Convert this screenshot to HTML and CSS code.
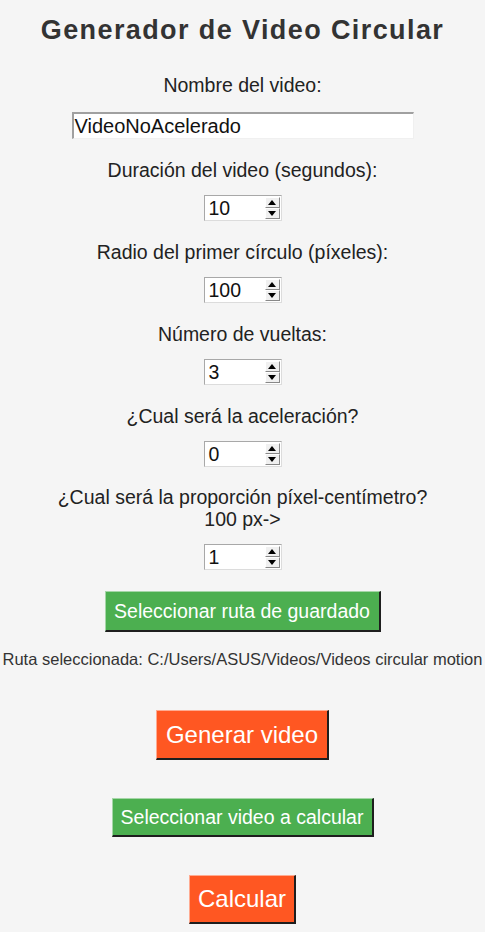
FILE: index.html
```html
<!DOCTYPE html>
<html lang="es">
<head>
<meta charset="utf-8">
<title>Generador de Video Circular</title>
<link rel="stylesheet" href="styles.css">
</head>
<body>
<main class="app">
  <h1 class="title">Generador de Video Circular</h1>

  <p class="label l-first">Nombre del video:</p>
  <div class="entry">VideoNoAcelerado</div>

  <p class="label">Duración del video (segundos):</p>
  <div class="spin"><span class="spin-val">10</span><span class="spin-btns"><span class="sb up"></span><span class="sb down"></span></span></div>

  <p class="label">Radio del primer círculo (píxeles):</p>
  <div class="spin"><span class="spin-val">100</span><span class="spin-btns"><span class="sb up"></span><span class="sb down"></span></span></div>

  <p class="label">Número de vueltas:</p>
  <div class="spin"><span class="spin-val">3</span><span class="spin-btns"><span class="sb up"></span><span class="sb down"></span></span></div>

  <p class="label">¿Cual será la aceleración?</p>
  <div class="spin"><span class="spin-val">0</span><span class="spin-btns"><span class="sb up"></span><span class="sb down"></span></span></div>

  <p class="label label-two">¿Cual será la proporción píxel-centímetro?<br>100 px-&gt;</p>
  <div class="spin"><span class="spin-val">1</span><span class="spin-btns"><span class="sb up"></span><span class="sb down"></span></span></div>

  <button class="btn btn-green btn-ruta">Seleccionar ruta de guardado</button>
  <p class="ruta">Ruta seleccionada: C:/Users/ASUS/Videos/Videos circular motion</p>

  <button class="btn btn-orange btn-generar">Generar video</button>
  <button class="btn btn-green btn-sel">Seleccionar video a calcular</button>
  <button class="btn btn-orange btn-calc">Calcular</button>
</main>
</body>
</html>
```

FILE: styles.css
```css
html, body {
  margin: 0;
  padding: 0;
  background: #f5f5f5;
}

body {
  font-family: "Liberation Sans", Arial, sans-serif;
  color: #222;
}

.app {
  display: flex;
  flex-direction: column;
  align-items: center;
  width: 485px;
}

.title {
  margin: 15px 0 0;
  font-size: 27px;
  line-height: 30px;
  font-weight: bold;
  color: #333;
  letter-spacing: 1.4px;
}

.label {
  margin: 20px 0 0;
  font-size: 19.5px;
  line-height: 22px;
  text-align: center;
}

.l-first {
  margin-top: 29px;
}

.label-two {
  line-height: 21.5px;
}

.entry {
  box-sizing: border-box;
  margin-top: 16px;
  width: 342px;
  height: 27px;
  background: #fff;
  border-top: 2px solid #a0a0a0;
  border-left: 2px solid #a0a0a0;
  border-right: 1px solid #f0f0f0;
  border-bottom: 1px solid #f0f0f0;
  padding-left: 1px;
  font-size: 20px;
  line-height: 24px;
  color: #111;
}

.spin {
  box-sizing: border-box;
  margin-top: 14px;
  width: 78px;
  height: 26px;
  display: flex;
  background: #fff;
  border: 1px solid #a8a8a8;
  border-right-color: #dcdcdc;
  border-bottom-color: #dcdcdc;
  padding: 1px 1px 1px 0;
}

.spin-val {
  flex: 1;
  padding-left: 4px;
  font-size: 19.5px;
  line-height: 23px;
  color: #111;
}

.spin-btns {
  width: 15px;
  display: flex;
  flex-direction: column;
}

.sb {
  flex: 1;
  box-sizing: border-box;
  background: #f0f0f0;
  border-top: 1px solid #fff;
  border-left: 1px solid #fff;
  border-right: 1px solid #888;
  border-bottom: 1px solid #888;
  display: flex;
  align-items: center;
  justify-content: center;
}

.sb::before {
  content: "";
  width: 0;
  height: 0;
  border-left: 4px solid transparent;
  border-right: 4px solid transparent;
}

.sb.up::before {
  border-bottom: 5px solid #000;
}

.sb.down::before {
  border-top: 5px solid #000;
}

.btn {
  box-sizing: border-box;
  font-family: "Liberation Sans", Arial, sans-serif;
  color: #fff;
  border-style: solid;
  border-width: 1px 2px 2px 1px;
  padding: 0;
  cursor: pointer;
}

.btn-green {
  background: #4caf50;
  border-color: #a5d6a7 #1e1e1e #1e1e1e #a5d6a7;
}

.btn-orange {
  background: #ff5722;
  border-color: #ffab91 #1e1e1e #1e1e1e #ffab91;
}

.btn-ruta {
  margin-top: 21px;
  width: 276px;
  height: 41px;
  font-size: 19.5px;
}

.ruta {
  margin: 18px 0 0;
  font-size: 16.5px;
  line-height: 19px;
  color: #333;
  white-space: nowrap;
}

.btn-generar {
  margin-top: 41px;
  width: 173px;
  height: 50px;
  font-size: 24px;
}

.btn-sel {
  margin-top: 38px;
  width: 262px;
  height: 39px;
  font-size: 19.5px;
}

.btn-calc {
  margin-top: 38px;
  width: 107px;
  height: 49px;
  font-size: 24px;
}
```
